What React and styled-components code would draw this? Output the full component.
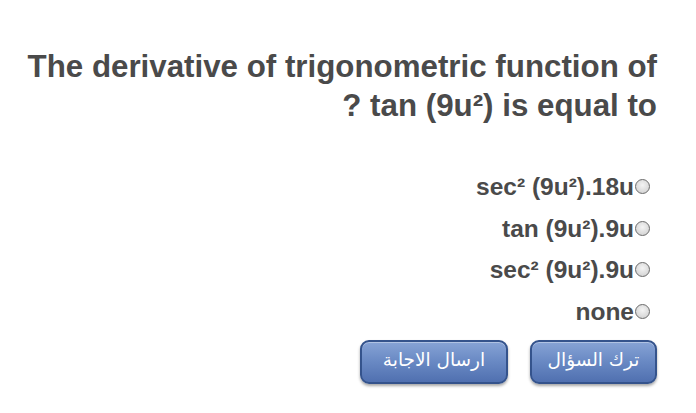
import React from 'react';
import styled, { createGlobalStyle } from 'styled-components';

const GlobalStyle = createGlobalStyle`
  html, body {
    margin: 0;
    padding: 0;
    background: #ffffff;
  }
`;

const Page = styled.div`
  width: 696px;
  height: 413px;
  box-sizing: border-box;
  padding: 47px 39px 0 20px;
  direction: rtl;
  font-family: "Liberation Sans", Arial, sans-serif;
  color: #4a4a4a;
`;

const Question = styled.h1`
  margin: 0;
  font-size: 31.3px;
  line-height: 39px;
  font-weight: bold;
  text-align: right;
`;

const Options = styled.div`
  display: flex;
  flex-direction: column;
  align-items: flex-start;
  gap: 16.5px;
  margin-top: 49px;
  padding-right: 7px;
`;

const Option = styled.label`
  display: flex;
  align-items: center;
  font-size: 24.5px;
  font-weight: bold;
  line-height: 25px;
  direction: rtl;
`;

const Label = styled.span`
  direction: ltr;
  unicode-bidi: isolate;
`;

const Radio = styled.span`
  width: 13px;
  height: 13px;
  border: 1.5px solid #6a6a6a;
  border-radius: 50%;
  background: radial-gradient(circle at 50% 40%, #f4f4f4 0%, #d8d8d8 70%, #c4c4c4 100%);
  flex-shrink: 0;
  margin-left: 1px;
`;

const Buttons = styled.div`
  display: flex;
  gap: 22px;
  margin-top: 16px;
`;

const Button = styled.button`
  width: ${p => p.$w}px;
  height: 44px;
  box-sizing: border-box;
  border: 2px solid #34538c;
  border-radius: 9px;
  background: linear-gradient(#86a3d5 0%, #6b8bc5 45%, #5070b0 100%);
  box-shadow: 0 2px 3px rgba(0, 0, 0, 0.35), inset 0 1px 0 rgba(255, 255, 255, 0.35);
  color: #ffffff;
  font-family: "DejaVu Sans", sans-serif;
  font-size: 18.5px;
  padding: 0 0 4px;
  direction: rtl;
`;

const options = [
  'sec² (9u²).18u',
  'tan (9u²).9u',
  'sec² (9u²).9u',
  'none',
];

export default function App() {
  return (
    <>
      <GlobalStyle />
      <Page>
        <Question>
          The derivative of trigonometric function of tan (9u²) is equal to ?
        </Question>
        <Options>
          {options.map((o, i) => (
            <Option key={i}>
              <Radio />
              <Label>{o}</Label>
            </Option>
          ))}
        </Options>
        <Buttons>
          <Button $w={127}>ترك السؤال</Button>
          <Button $w={148}>ارسال الاجابة</Button>
        </Buttons>
      </Page>
    </>
  );
}
